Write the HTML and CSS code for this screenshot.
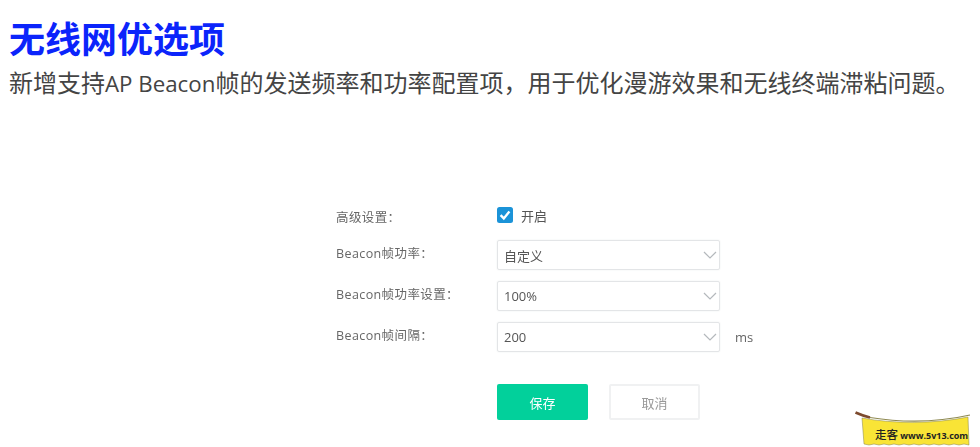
FILE: index.html
```html
<!DOCTYPE html>
<html lang="zh-CN">
<head>
<meta charset="utf-8">
<title>无线网优选项</title>
<link rel="stylesheet" href="styles.css">
</head>
<body>
<header class="intro">
  <h1 class="title">无线网优选项</h1>
  <p class="desc">新增支持<span class="latin">AP Beacon</span>帧的发送频率和功率配置项，用于优化漫游效果和无线终端滞粘问题。</p>
</header>
<form class="form">
  <div class="row row-check">
    <span class="label label-check">高级设置：</span>
    <span class="check">
      <svg class="box" viewBox="0 0 16 16" width="16" height="16"><rect width="16" height="16" rx="2.5" fill="#1b93d8"/><path d="M3.6 8.2 6.8 11.4 12.4 4.6" fill="none" stroke="#fff" stroke-width="2.4"/></svg>
      <span>开启</span>
    </span>
  </div>
  <div class="row">
    <span class="label">Beacon帧功率：</span>
    <span class="select"><span>自定义</span><svg class="chev" viewBox="0 0 14 8" width="14" height="8"><path d="M1 1 7 7 13 1" fill="none" stroke="#b4b8bc" stroke-width="1.2"/></svg></span>
  </div>
  <div class="row">
    <span class="label">Beacon帧功率设置：</span>
    <span class="select"><span>100%</span><svg class="chev" viewBox="0 0 14 8" width="14" height="8"><path d="M1 1 7 7 13 1" fill="none" stroke="#b4b8bc" stroke-width="1.2"/></svg></span>
  </div>
  <div class="row">
    <span class="label">Beacon帧间隔：</span>
    <span class="select"><span>200</span><svg class="chev" viewBox="0 0 14 8" width="14" height="8"><path d="M1 1 7 7 13 1" fill="none" stroke="#b4b8bc" stroke-width="1.2"/></svg></span>
    <span class="unit">ms</span>
  </div>
  <div class="actions">
    <span class="btn btn-save">保存</span>
    <span class="btn btn-cancel">取消</span>
  </div>
</form>
<div class="stamp">
  <svg class="stamp-bg" viewBox="0 0 126 46" width="126" height="46">
    <path d="M8 17 C40 23 80 23 114 16 L115 44 L110 43 L105 44 L100 43 L95 44 L90 43 L85 44 L80 43 L75 44 L70 43 L65 44 L60 43 L55 44 L50 43 L45 44 L40 43 L35 44 L30 43 L25 44 L20 43 L15 44 L10 43 Z" fill="#f9e436" stroke="#85824c" stroke-width=".5"/>
    <path d="M1.5 11.5 C6 13.5 10 15 16 16.5" fill="none" stroke="#7d4a2e" stroke-width="2.6"/>
    <path d="M16 16.5 C50 22 85 21 116 14" fill="none" stroke="#8f8a52" stroke-width="1.2"/>
  </svg>
  <span class="stamp-text"><b>走客</b> www.5v13.com</span>
</div>
</body>
</html>
```
FILE: styles.css
```css
* { box-sizing: border-box; }
html, body { margin: 0; height: 447px; overflow: hidden; background: #fff; }
body {
  position: relative;
  font-family: "Open Sans", "Noto Sans CJK SC", sans-serif;
}
.intro { padding: 14px 0 0 9px; }
.title {
  margin: 0;
  font: 700 36px/46px "Noto Sans CJK SC", sans-serif;
  color: #0b24fb;
}
.desc {
  margin: 7px 0 0;
  font-size: 24px;
  line-height: 32px;
  font-weight: 400;
  color: #444;
  white-space: nowrap;
}
.latin { font-size: 22.3px; }
.form {
  margin: 0;
  padding: 105px 0 0 336px;
  font-size: 13px;
  color: #666;
  filter: blur(.6px);
}
.row { display: flex; align-items: center; height: 30px; margin-bottom: 11px; }
.row-check { height: 20px; margin-bottom: 15px; }
.label { width: 161px; flex: none; font-size: 12.5px; position: relative; top: -3px; letter-spacing: .4px; }
.label-check { top: 1px; }
.check { display: flex; align-items: center; gap: 8px; color: #555; }
.box { display: block; }
.select {
  width: 223px;
  height: 30px;
  padding: 0 2px 0 6px;
  display: flex;
  align-items: center;
  justify-content: space-between;
  border: 1px solid #e3e5e7;
  border-radius: 2px;
  box-shadow: 0 0 2px #eceeef;
  background: #fff;
  color: #555;
}
.unit { margin-left: 15px; }
.actions { display: flex; gap: 21px; margin: 32px 0 0 161px; }
.btn {
  width: 91px;
  height: 36px;
  display: flex;
  align-items: center;
  justify-content: center;
  border-radius: 2px;
}
.btn-save { background: #02d09b; color: #fff; }
.btn-cancel { background: #fff; color: #999; border: 2px solid #f0f1f2; }
.stamp { position: absolute; left: 854px; top: 401px; width: 126px; height: 46px; }
.stamp-bg { display: block; }
.stamp-text {
  position: absolute;
  left: 21px;
  top: 26px;
  font-size: 9px;
  line-height: 14px;
  font-weight: 700;
  color: #222;
  white-space: nowrap;
}
.stamp-text b { font-family: "Noto Sans CJK SC", sans-serif; font-size: 11.5px; font-weight: 500; }
```
